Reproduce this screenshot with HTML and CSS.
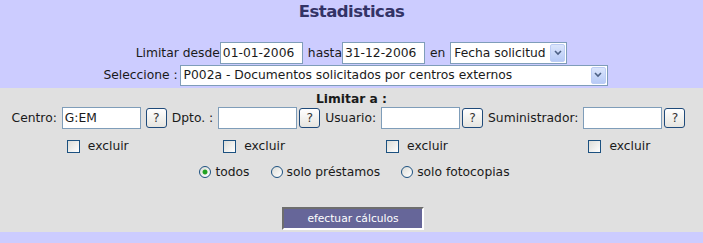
FILE: index.html
```html
<!DOCTYPE html>
<html lang="es">
  <head>
    <meta charset="UTF-8" />
    <meta name="viewport" content="width=device-width, initial-scale=1.0" />
    <link rel="stylesheet" href="styles.css">
    <title>Estadisticas</title>
  </head>
  <body>
    <div class="header">
      <h1 class="title">Estadisticas</h1>
      <div class="line line-dates">
        <span>Limitar desde</span>
        <input class="text-input date" type="text" value="01-01-2006" />
        <span class="gap-left">hasta</span>
        <input class="text-input date" type="text" value="31-12-2006" />
        <span class="gap-both">en</span>
        <span class="combo combo-field">
          <select>
            <option>Fecha solicitud</option>
          </select>
          <span class="arrow">
            <svg width="8" height="6" viewBox="0 0 8 6"><path d="M1 1 L4 4 L7 1" fill="none" stroke="#4d6185" stroke-width="1.6"/></svg>
          </span>
        </span>
      </div>
      <div class="line line-report">
        <span class="gap-right">Seleccione :</span>
        <span class="combo combo-report">
          <select>
            <option>P002a - Documentos solicitados por centros externos</option>
          </select>
          <span class="arrow">
            <svg width="8" height="6" viewBox="0 0 8 6"><path d="M1 1 L4 4 L7 1" fill="none" stroke="#4d6185" stroke-width="1.6"/></svg>
          </span>
        </span>
      </div>
    </div>

    <div class="panel">
      <div class="caption">Limitar a :</div>
      <div class="filters">
        <span class="label">Centro:</span>
        <span class="lookup lookup-first">
          <input class="text-input" type="text" value="G:EM" />
          <button class="help" type="button">?</button>
        </span>
        <span class="label">Dpto. :</span>
        <span class="lookup">
          <input class="text-input" type="text" />
          <button class="help" type="button">?</button>
        </span>
        <span class="label">Usuario:</span>
        <span class="lookup">
          <input class="text-input" type="text" />
          <button class="help" type="button">?</button>
        </span>
        <span class="label">Suministrador:</span>
        <span class="lookup">
          <input class="text-input" type="text" />
          <button class="help" type="button">?</button>
        </span>

        <span></span>
        <label class="exclude"><input class="check" type="checkbox" />excluir</label>
        <span></span>
        <label class="exclude"><input class="check" type="checkbox" />excluir</label>
        <span></span>
        <label class="exclude"><input class="check" type="checkbox" />excluir</label>
        <span></span>
        <label class="exclude"><input class="check" type="checkbox" />excluir</label>
      </div>

      <div class="modes">
        <label class="mode"><input class="radio" type="radio" name="tipo" checked />todos</label>
        <label class="mode"><input class="radio" type="radio" name="tipo" />solo préstamos</label>
        <label class="mode"><input class="radio" type="radio" name="tipo" />solo fotocopias</label>
      </div>

      <div class="actions">
        <button class="run" type="button">efectuar cálculos</button>
      </div>
    </div>
  </body>
</html>
```

FILE: styles.css
```css
body {
  margin: 0;
  background: #ccccff;
  font-family: "DejaVu Sans", Verdana, sans-serif;
  font-size: 12.3px;
  color: #1a1a1a;
}

.header {
  padding-bottom: 2px;
}

.title {
  margin: 0;
  padding-top: 1px;
  line-height: 22px;
  font-size: 16.5px;
  letter-spacing: -0.5px;
  color: #333366;
  text-align: center;
}

.line {
  display: flex;
  justify-content: center;
  align-items: center;
}

.line-dates {
  margin-top: 19px;
  height: 22px;
}

.line-report {
  height: 22px;
  padding-left: 8px;
}

.gap-left {
  margin-left: 5px;
}

.gap-both {
  margin: 0 5px;
}

.gap-right {
  margin-right: 2px;
}

.text-input {
  box-sizing: border-box;
  height: 22px;
  padding: 1px 2px;
  border: 1px solid #7f9db9;
  background: #fff;
  font: inherit;
  color: #1a1a1a;
  outline: none;
}

.date {
  width: 83px;
}

.combo {
  box-sizing: border-box;
  display: inline-flex;
  height: 21px;
  border: 1px solid #7f9db9;
  background: #fff;
}

.combo-field {
  width: 117px;
  height: 22px;
}

.combo-report {
  width: 428px;
}

.combo select {
  flex: 1;
  min-width: 0;
  appearance: none;
  border: 0;
  padding: 0 3px;
  background: transparent;
  font: inherit;
  color: #1a1a1a;
  outline: none;
}

.arrow {
  display: flex;
  align-items: center;
  justify-content: center;
  width: 15px;
  margin: 1px;
  border: 1px solid #bccdf5;
  border-radius: 2px;
  background: linear-gradient(#dbe5fc, #b7caf6);
  box-sizing: border-box;
}

.panel {
  height: 144px;
  box-sizing: border-box;
  padding-top: 3px;
  background: #e0e0e0;
}

.caption {
  line-height: 16px;
  font-weight: bold;
  text-align: center;
}

.filters {
  display: grid;
  grid-template-columns: repeat(4, auto auto);
  justify-content: center;
  align-items: center;
  column-gap: 5px;
  row-gap: 7px;
  padding-right: 6px;
}

.lookup {
  display: flex;
  align-items: center;
  gap: 2px;
}

.lookup-first {
  gap: 5px;
}

.lookup .text-input {
  width: 79px;
}

.help {
  box-sizing: border-box;
  width: 21px;
  height: 20px;
  padding: 0;
  border: 1px solid #1f4a7a;
  border-radius: 3px;
  background: linear-gradient(#ffffff, #e6e5e0);
  font: inherit;
  color: #333;
}

.exclude {
  display: flex;
  align-items: center;
  height: 20px;
  gap: 8px;
  padding-left: 5px;
}

.check {
  appearance: none;
  box-sizing: border-box;
  width: 13px;
  height: 13px;
  margin: 0;
  border: 1px solid #1c5180;
  background: linear-gradient(135deg, #dcdcd7, #ffffff);
}

.modes {
  display: flex;
  justify-content: center;
  align-items: center;
  gap: 21px;
  height: 20px;
  margin-top: 6px;
  padding-left: 6px;
}

.mode {
  display: flex;
  align-items: center;
  gap: 4px;
}

.radio {
  appearance: none;
  box-sizing: border-box;
  width: 12px;
  height: 12px;
  margin: 0;
  border: 1px solid #1c5180;
  border-radius: 50%;
  background: linear-gradient(135deg, #dcdcd7, #ffffff);
}

.radio:checked {
  background: radial-gradient(circle, #21a121 0 2px, #8fd18f 2.5px, transparent 3px),
    linear-gradient(135deg, #dcdcd7, #ffffff);
}

.actions {
  display: flex;
  justify-content: center;
  margin-top: 25px;
  padding-left: 3px;
}

.run {
  box-sizing: border-box;
  width: 142px;
  height: 23px;
  padding: 0;
  border: 2px solid;
  border-color: #6e6e6e #ffffff #ffffff #6e6e6e;
  background: #666699;
  color: #fff;
  font-family: "DejaVu Sans", Verdana, sans-serif;
  font-size: 10.7px;
}
```
